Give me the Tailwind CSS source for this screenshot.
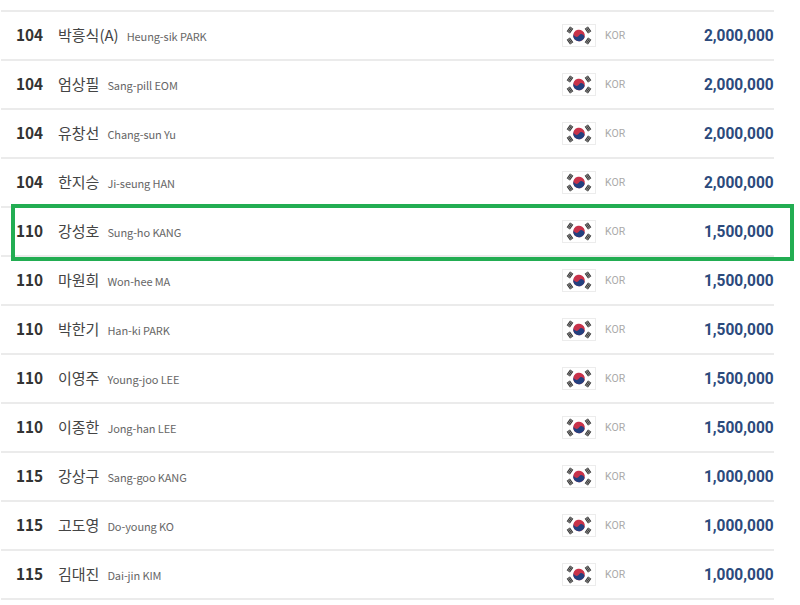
<!DOCTYPE html>
<html lang='en'>
<head>
	<meta charset='UTF-8'>
	<title>Ranking</title>
	<script src="https://cdn.jsdelivr.net/npm/@tailwindcss/browser@4"></script>
</head>
<body class='bg-white overflow-hidden font-["Roboto","Noto_Sans_CJK_KR",sans-serif]'>
	<svg class='hidden'>
		<symbol id='flag-kor' viewBox='0 0 34 23'>
			<rect x='0.5' y='0.5' width='33' height='22' fill='#fff' stroke='#ececec'/>
			<g transform='rotate(33.7 17 11.5)'>
				<circle cx='17' cy='11.5' r='5.8' fill='#c8324a'/>
				<path d='M11.2 11.5a5.8 5.8 0 0 0 11.6 0a2.9 2.9 0 0 0-5.8 0a2.9 2.9 0 0 1-5.8 0z' fill='#23407f'/>
			</g>
			<g fill='#3a3a3a'>
				<path transform='translate(8 6) rotate(-56)' d='M-3-2h6v1.2h-6zM-3-.6h6v1.2h-6zM-3 .8h6v1.2h-6z'/>
				<path transform='translate(26 6) rotate(56)' d='M-3-2h6v1.2h-6zM-3-.6h6v1.2h-6zM-3 .8h6v1.2h-6z'/>
				<path transform='translate(8 17) rotate(56)' d='M-3-2h6v1.2h-6zM-3-.6h6v1.2h-6zM-3 .8h6v1.2h-6z'/>
				<path transform='translate(26 17) rotate(-56)' d='M-3-2h6v1.2h-6zM-3-.6h6v1.2h-6zM-3 .8h6v1.2h-6z'/>
			</g>
		</symbol>
	</svg>

	<div id='rank-list' class='w-[773px] ml-px mt-[10px] border-t-2 border-[#ebebeb]'></div>

	<!-- highlight box -->
	<div class='absolute left-[11px] top-[204px] w-[783px] h-[57px] border-4 border-[#22ad52]'></div>

	<script>
		const rows = [
			['104', '박흥식(A)', 'Heung-sik PARK', '2,000,000'],
			['104', '엄상필', 'Sang-pill EOM', '2,000,000'],
			['104', '유창선', 'Chang-sun Yu', '2,000,000'],
			['104', '한지승', 'Ji-seung HAN', '2,000,000'],
			['110', '강성호', 'Sung-ho KANG', '1,500,000'],
			['110', '마원희', 'Won-hee MA', '1,500,000'],
			['110', '박한기', 'Han-ki PARK', '1,500,000'],
			['110', '이영주', 'Young-joo LEE', '1,500,000'],
			['110', '이종한', 'Jong-han LEE', '1,500,000'],
			['115', '강상구', 'Sang-goo KANG', '1,000,000'],
			['115', '고도영', 'Do-young KO', '1,000,000'],
			['115', '김대진', 'Dai-jin KIM', '1,000,000'],
		];

		const list = document.getElementById('rank-list');
		rows.forEach(row => {
			const el = document.createElement('div');
			el.className = 'flex items-center h-[49px] border-b-2 border-[#ebebeb]';
			el.innerHTML = `
				<span class='w-[42px] pl-[15px] pb-px box-content shrink-0'><span class='inline-block origin-left scale-x-[.96] text-base font-bold text-[#333] font-["Noto_Sans_CJK_KR",sans-serif]'>${row[0]}</span></span>
				<div class='flex-1 flex items-baseline min-w-0'>
					<span class='text-[15px] text-[#444] font-["Noto_Sans_CJK_KR",sans-serif]'>${row[1]}</span>
					<span class='ml-2 text-[11px] tracking-[-0.1px] text-[#666] font-["Noto_Sans_CJK_KR",sans-serif]'>${row[2]}</span>
				</div>
				<svg class='w-[34px] h-[23px] shrink-0'><use href='#flag-kor'/></svg>
				<span class='ml-[9px] w-[34px] text-[10.5px] text-[#aaa]'>KOR</span>
				<span class='w-[135px] text-right'><span class='inline-block origin-right scale-x-[.91] text-[17px] font-bold text-[#2c4a7c]'>${row[3]}</span></span>
			`;
			list.appendChild(el);
		});
	</script>
</body>
</html>
